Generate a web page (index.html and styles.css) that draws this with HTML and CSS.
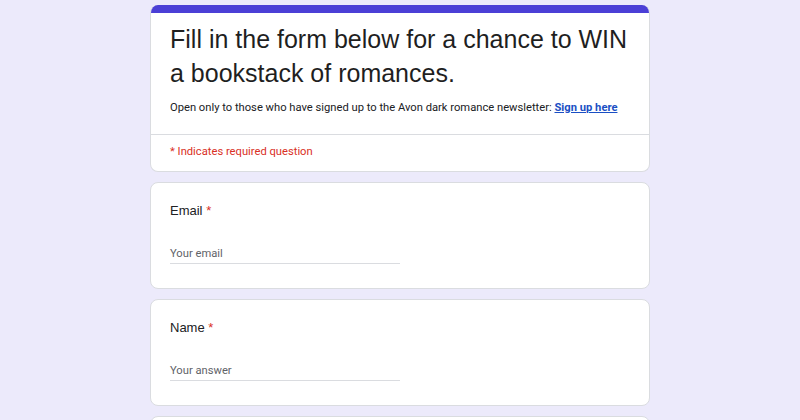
FILE: index.html
```html
<!DOCTYPE html>
<html lang="en">
<head>
<meta charset="utf-8">
<title>Bookstack giveaway</title>
<link rel="stylesheet" href="styles.css">
</head>
<body>
<main class="form">
  <section class="card header-card">
    <div class="band"></div>
    <div class="header-body">
      <h1 class="title">Fill in the form below for a chance to WIN a bookstack of romances.</h1>
      <p class="desc">Open only to those who have signed up to the Avon dark romance newsletter: <a class="link" href="#">Sign up here</a></p>
    </div>
    <div class="required-note">* Indicates required question</div>
  </section>
  <section class="card question">
    <div class="label">Email <span class="star">*</span></div>
    <div class="input">Your email</div>
  </section>
  <section class="card question">
    <div class="label">Name <span class="star">*</span></div>
    <div class="input">Your answer</div>
  </section>
  <section class="card question"></section>
</main>
</body>
</html>
```
FILE: styles.css
```css
html, body {
  margin: 0;
  padding: 0;
}
body {
  background: #eceafb;
  font-family: Roboto, "Liberation Sans", Arial, sans-serif;
  overflow: hidden;
  height: 420px;
}
.form {
  width: 500px;
  margin: 5px auto 0;
  display: flex;
  flex-direction: column;
  gap: 10px;
}
.card {
  background: #fff;
  border: 1px solid #dadce0;
  border-radius: 8px;
  overflow: hidden;
  flex-shrink: 0;
}
.header-card {
  border-top: none;
}
.band {
  height: 8px;
  background: #4b3fd6;
}
.header-body {
  padding: 9px 19px 18px;
  border-bottom: 1px solid #dadce0;
}
.title {
  margin: 0;
  font-family: "Liberation Sans", Arial, sans-serif;
  font-weight: 400;
  font-size: 25px;
  line-height: 34px;
  color: #1f1f1f;
}
.desc {
  margin: 10px 0 0;
  font-size: 11.2px;
  line-height: 16px;
  color: #202124;
}
.link {
  color: #1a4fc4;
  font-weight: 700;
  text-decoration: underline;
}
.required-note {
  padding: 9px 19px 11px;
  font-size: 11.2px;
  line-height: 16px;
  color: #d93025;
}
.question {
  padding: 19px 19px 22px;
  min-height: 64px;
}
.label {
  font-family: "Liberation Sans", Arial, sans-serif;
  font-size: 13px;
  line-height: 18px;
  color: #202124;
}
.star {
  color: #d93025;
}
.input {
  margin-top: 26px;
  width: 230px;
  font-size: 11.2px;
  line-height: 16px;
  padding-bottom: 1px;
  color: #5f6368;
  border-bottom: 1px solid #dadce0;
}
```
